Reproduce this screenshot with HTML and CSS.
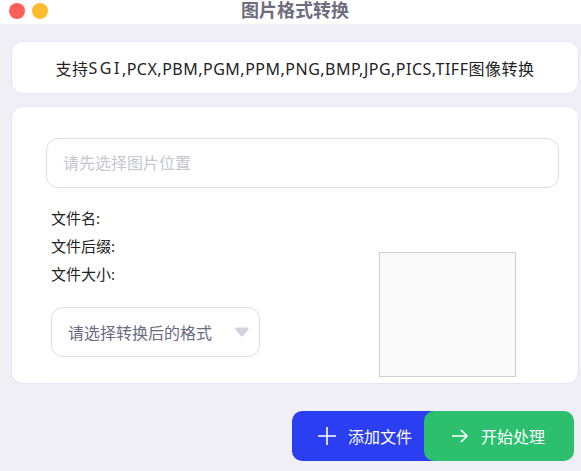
FILE: index.html
```html
<!DOCTYPE html>
<html lang="zh-CN">
<head>
  <meta charset="UTF-8">
  <title>图片格式转换</title>
  <link rel="stylesheet" href="styles.css">
</head>
<body>
  <!-- 标题栏 -->
  <div class="titlebar">
    <div class="dots">
      <span class="dot dot-red"></span>
      <span class="dot dot-yellow"></span>
    </div>
    <div class="title">图片格式转换</div>
  </div>

  <div class="main">
    <div class="card card-tip">
      支持<span class="sgi">SGI</span>,PCX,PBM,PGM,PPM,PNG,BMP,JPG,PICS,TIFF图像转换
    </div>

    <div class="card card-form">
      <input type="text" class="path-input" placeholder="请先选择图片位置" readonly>
      <div class="info-row">
        <div class="info-left">
          <div class="info-line">文件名:</div>
          <div class="info-line">文件后缀:</div>
          <div class="info-line">文件大小:</div>
          <div class="format-select">
            <span>请选择转换后的格式</span>
            <svg class="select-arrow" width="14" height="10" viewBox="0 0 14 10">
              <path d="M2 2 L12 2 L7 8 Z" fill="#d3d3e0" stroke="#d3d3e0" stroke-width="3" stroke-linejoin="round"/>
            </svg>
          </div>
        </div>
        <div class="preview"></div>
      </div>
    </div>

    <div class="actions">
      <button type="button" class="btn btn-add">
        <svg width="20" height="20" viewBox="0 0 20 20">
          <path d="M10 1 V19 M1 10 H19" stroke="#fff" stroke-width="1.6" fill="none"/>
        </svg>
        添加文件
      </button>
      <button type="button" class="btn btn-start">
        <svg width="18" height="16" viewBox="0 0 18 16">
          <path d="M1 8 H16 M10 2 L16 8 L10 14" stroke="#fff" stroke-width="1.6" fill="none"/>
        </svg>
        开始处理
      </button>
    </div>
  </div>
</body>
</html>
```

FILE: styles.css
```css
* {
  margin: 0;
  padding: 0;
  box-sizing: border-box;
}
body {
  font-family: "Noto Sans", "Noto Sans CJK SC", sans-serif;
  background: #efeff5;
  color: #222;
  width: 581px;
  height: 471px;
  overflow: hidden;
}
/* 标题栏 */
.titlebar {
  position: relative;
  height: 24px;
  background: #fff;
  display: flex;
  justify-content: center;
}
.dots {
  position: absolute;
  left: 9px;
  top: 3px;
  display: flex;
  gap: 7px;
}
.dot {
  width: 16px;
  height: 16px;
  border-radius: 50%;
}
.dot-red {
  background: #fe5f57;
}
.dot-yellow {
  background: #fdbc2f;
}
.title {
  font-size: 18px;
  font-weight: bold;
  color: #6d6d7e;
  line-height: 20px;
  margin-left: 9px;
}
.main {
  padding: 17px 2px 0 11px;
}
.card {
  background: #fff;
  border: 1px solid #e4e6f8;
  border-radius: 12px;
}
.card-tip {
  height: 53px;
  display: flex;
  align-items: center;
  justify-content: center;
  font-size: 16px;
  letter-spacing: 0.5px;
}
.sgi {
  letter-spacing: 2.5px;
}
.card-form {
  margin-top: 12px;
  height: 278px;
  padding: 31px 0 0 34px;
}
.path-input {
  display: block;
  width: 513px;
  height: 50px;
  border: 1px solid #dddcf0;
  border-radius: 12px;
  padding: 0 16px;
  font-family: inherit;
  font-size: 16px;
  outline: none;
}
.path-input::placeholder {
  color: #c6c6d2;
}
.info-row {
  display: flex;
}
.info-left {
  width: 333px;
  padding: 16px 0 0 5px;
}
.info-line {
  font-size: 15px;
  line-height: 28px;
}
.format-select {
  margin-top: 19px;
  width: 209px;
  height: 50px;
  border: 1px solid #dddcf0;
  border-radius: 12px;
  display: flex;
  align-items: center;
  justify-content: space-between;
  padding: 0 10px 0 16px;
  font-size: 16px;
  color: #6a6a82;
}
.preview {
  margin-top: 64px;
  width: 137px;
  height: 125px;
  background: #fafafa;
  border: 1px solid #cfcfcf;
}
/* 按钮 */
.actions {
  display: flex;
  justify-content: flex-end;
  margin-top: 27px;
  padding-right: 5px;
}
.btn {
  width: 150px;
  height: 50px;
  border: none;
  border-radius: 10px;
  color: #fff;
  font-family: inherit;
  font-size: 16px;
  display: flex;
  align-items: center;
  gap: 11px;
  cursor: pointer;
}
.btn-add {
  background: #2b3ef1;
  padding-left: 25px;
}
.btn-start {
  background: #2bbf6e;
  padding-left: 27px;
  margin-left: -18px;
  gap: 12px;
}
```
